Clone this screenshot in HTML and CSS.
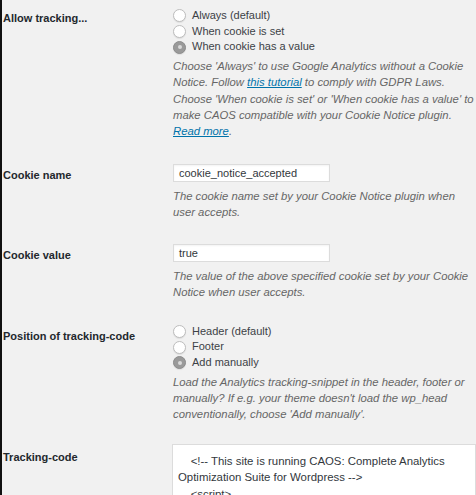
FILE: index.html
```html
<!DOCTYPE html>
<html>
<head>
<meta charset="utf-8">
<link rel="stylesheet" href="styles.css">
</head>
<body>
<div class="page">
  <div class="row row-first">
    <div class="label label-radio">Allow tracking...</div>
    <div class="field">
      <div class="radios">
        <div class="opt"><span class="radio"></span>Always (default)</div>
        <div class="opt"><span class="radio"></span>When cookie is set</div>
        <div class="opt"><span class="radio checked"></span>When cookie has a value</div>
      </div>
      <p class="desc desc-long">Choose 'Always' to use Google Analytics without a Cookie Notice. Follow <a href="#">this tutorial</a> to comply with GDPR Laws. Choose 'When cookie is set' or 'When cookie has a value' to make CAOS compatible with your Cookie Notice plugin. <a href="#">Read more</a>.</p>
    </div>
  </div>

  <div class="row">
    <div class="label label-input">Cookie name</div>
    <div class="field">
      <div class="input">cookie_notice_accepted</div>
      <p class="desc desc-input">The cookie name set by your Cookie Notice plugin when user accepts.</p>
    </div>
  </div>

  <div class="row">
    <div class="label label-input">Cookie value</div>
    <div class="field">
      <div class="input">true</div>
      <p class="desc desc-input">The value of the above specified cookie set by your Cookie Notice when user accepts.</p>
    </div>
  </div>

  <div class="row row-pos">
    <div class="label label-radio2">Position of tracking-code</div>
    <div class="field">
      <div class="radios">
        <div class="opt"><span class="radio"></span>Header (default)</div>
        <div class="opt"><span class="radio"></span>Footer</div>
        <div class="opt"><span class="radio checked"></span>Add manually</div>
      </div>
      <p class="desc">Load the Analytics tracking-snippet in the header, footer or manually? If e.g. your theme doesn't load the wp_head conventionally, choose 'Add manually'.</p>
    </div>
  </div>

  <div class="row row-code">
    <div class="label label-code">Tracking-code</div>
    <div class="field">
      <div class="code">    &lt;!-- This site is running CAOS: Complete Analytics Optimization Suite for Wordpress --&gt;
    &lt;script&gt;</div>
    </div>
  </div>
</div>
</body>
</html>
```

FILE: styles.css
```css
html, body {
  margin: 0;
  padding: 0;
  overflow: hidden;
  height: 100%;
}
body {
  background: #f1f1f1;
  font-family: "Liberation Sans", Arial, sans-serif;
  font-size: 11px;
  color: #32373c;
}
.page {
  border-left: 2px solid #111;
  min-height: 100%;
  padding-left: 1px;
  padding-top: 8px;
  display: flex;
  flex-direction: column;
  gap: 24px;
}
.row {
  display: grid;
  grid-template-columns: 170px 1fr;
}
.row-pos { margin-top: -1px; }
.row-code { margin-top: -3px; }
.label {
  font-weight: bold;
  color: #23282d;
  line-height: 16px;
}
.label-radio { padding-top: 2px; }
.label-input { padding-top: 3px; }
.label-radio2 { padding-top: 4px; }
.label-code { padding-top: 5px; }
.radios { line-height: 15.7px; }
.opt {
  display: flex;
  align-items: center;
  height: 15.7px;
  color: #3c4146;
}
.radio {
  box-sizing: border-box;
  width: 13px;
  height: 13px;
  border-radius: 50%;
  border: 1px solid #bdbdbd;
  background: #fff;
  margin-right: 6px;
  position: relative;
  box-shadow: 0 1px 1px rgba(0,0,0,0.08);
}
.radio.checked {
  background: #9a9a9a;
  border-color: #8c8c8c;
}
.radio.checked::after {
  content: "";
  position: absolute;
  left: 3.5px;
  top: 3.5px;
  width: 4px;
  height: 4px;
  border-radius: 50%;
  background: #d9d9d9;
}
.desc {
  margin: 3px 0 0;
  font-style: italic;
  font-size: 11.3px;
  color: #666;
  line-height: 16.3px;
}
.desc-input { margin-top: 6px; }
.desc a {
  color: #0073aa;
  text-decoration: underline;
}
.input {
  box-sizing: border-box;
  width: 157px;
  height: 18px;
  background: #fff;
  border: 1px solid #dcdcdc;
  box-shadow: inset 0 1px 2px rgba(0,0,0,0.05);
  padding: 0 5px;
  line-height: 16px;
  color: #32373c;
}
.code {
  box-sizing: border-box;
  margin-left: -1px;
  width: 304px;
  height: 120px;
  background: #fff;
  border: 1px solid #dcdcdc;
  padding: 8px 2px 2px 5px;
  white-space: pre-wrap;
  font-size: 11.4px;
  line-height: 16.5px;
  color: #32373c;
}
```
